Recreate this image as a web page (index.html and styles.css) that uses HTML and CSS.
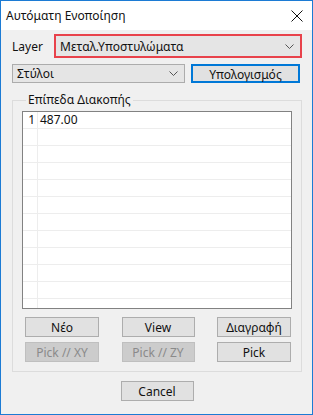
FILE: index.html
```html
<!DOCTYPE html>
<html lang="el">
<head>
  <meta charset="UTF-8" />
  <title>Αυτόματη Ενοποίηση</title>
  <link rel="stylesheet" href="styles.css">
</head>
<body>
  <div class="window">
    <div class="titlebar">
      <span class="title">Αυτόματη Ενοποίηση</span>
      <svg class="close" width="12" height="12" viewBox="0 0 12 12">
        <path d="M0.5 0.5 L11.5 11.5 M11.5 0.5 L0.5 11.5" stroke="#111" stroke-width="1" fill="none"/>
      </svg>
    </div>

    <div class="content">
      <div class="row-layer">
        <span class="label">Layer</span>
        <div class="combo combo-layer">
          <span>Μεταλ.Υποστυλώματα</span>
          <svg class="chev" width="9" height="5" viewBox="0 0 9 5"><path d="M0.5 0.5 L4.5 4.5 L8.5 0.5" stroke="#555" fill="none"/></svg>
        </div>
      </div>

      <div class="row-type">
        <div class="combo combo-type">
          <span>Στύλοι</span>
          <svg class="chev" width="9" height="5" viewBox="0 0 9 5"><path d="M0.5 0.5 L4.5 4.5 L8.5 0.5" stroke="#555" fill="none"/></svg>
        </div>
        <button class="btn btn-focus">Υπολογισμός</button>
      </div>

      <fieldset class="group">
        <legend>Επίπεδα Διακοπής</legend>
        <div class="list">
          <div class="list-row"><span class="num">1</span><span class="val">487.00</span></div>
          <div class="list-row"><span class="num"></span><span class="val"></span></div>
          <div class="list-row"><span class="num"></span><span class="val"></span></div>
          <div class="list-row"><span class="num"></span><span class="val"></span></div>
          <div class="list-row"><span class="num"></span><span class="val"></span></div>
          <div class="list-row"><span class="num"></span><span class="val"></span></div>
          <div class="list-row"><span class="num"></span><span class="val"></span></div>
          <div class="list-row"><span class="num"></span><span class="val"></span></div>
          <div class="list-row"><span class="num"></span><span class="val"></span></div>
          <div class="list-row"><span class="num"></span><span class="val"></span></div>
          <div class="list-row"><span class="num"></span><span class="val"></span></div>
          <div class="list-row"><span class="num"></span><span class="val"></span></div>
        </div>
        <div class="actions">
          <button class="btn">Νέο</button>
          <button class="btn">View</button>
          <button class="btn">Διαγραφή</button>
          <button class="btn" disabled>Pick // XY</button>
          <button class="btn" disabled>Pick // ZY</button>
          <button class="btn">Pick</button>
        </div>
      </fieldset>

      <div class="footer">
        <button class="btn">Cancel</button>
      </div>
    </div>
  </div>
</body>
</html>
```

FILE: styles.css
```css
* {
  box-sizing: border-box;
}
body {
  margin: 0;
  font-family: 'Noto Sans', 'Liberation Sans', sans-serif;
  font-size: 12px;
  color: #111;
}
.window {
  width: 313px;
  height: 415px;
  border: 1px solid #1c7bd4;
  display: flex;
  flex-direction: column;
  background: #f0f0f0;
}
.titlebar {
  height: 29px;
  background: #fff;
  display: flex;
  align-items: center;
  justify-content: space-between;
  padding: 0 9px 0 5px;
  flex-shrink: 0;
}
.title {
  font-size: 12px;
}
.content {
  flex: 1;
  padding: 4px 10px 0 11px;
}
.row-layer {
  display: flex;
  align-items: center;
  height: 24px;
}
.label {
  width: 42px;
}
.combo {
  display: flex;
  align-items: center;
  justify-content: space-between;
  background: #e5e5e5;
  padding: 0 6px 0 4px;
}
.combo-layer {
  flex: 1;
  height: 24px;
  border: 2px solid #e8424b;
}
.combo-type {
  width: 173px;
  height: 19px;
  border: 1px solid #acacac;
}
.chev {
  display: block;
}
.row-type {
  display: flex;
  margin-top: 6px;
  height: 19px;
}
.btn {
  font-family: inherit;
  font-size: 12px;
  font-weight: 400;
  height: 20px;
  padding: 0;
  background: #e1e1e1;
  border: 1px solid #adadad;
  color: #111;
}
.btn:disabled {
  background: #cccccc;
  border-color: #bfbfbf;
  color: #8a8a8a;
}
.btn-focus {
  width: 109px;
  height: 19px;
  margin-left: 6px;
  border: 2px solid #0078d7;
}
.group {
  margin: 9px 0 0 0;
  border: 1px solid #dcdcdc;
  padding: 3px 9px 9px 9px;
  min-width: 0;
}
.group legend {
  padding: 0 2px;
  margin-left: 4px;
  line-height: 16px;
}
.list {
  height: 198px;
  background: #fff;
  border: 1px solid #828282;
  overflow: hidden;
}
.list-row {
  display: flex;
  height: 17px;
  border-bottom: 1px solid #ededed;
  line-height: 16px;
}
.num {
  width: 15px;
  border-right: 1px solid #ededed;
  text-align: right;
  padding-right: 2px;
}
.val {
  padding-left: 2px;
}
.actions {
  display: grid;
  grid-template-columns: 74px 73px 74px;
  justify-content: space-between;
  row-gap: 5px;
  margin: 8px 1px 0 3px;
}
.footer {
  display: flex;
  justify-content: center;
  margin-top: 9px;
}
.footer .btn {
  width: 73px;
}
```
